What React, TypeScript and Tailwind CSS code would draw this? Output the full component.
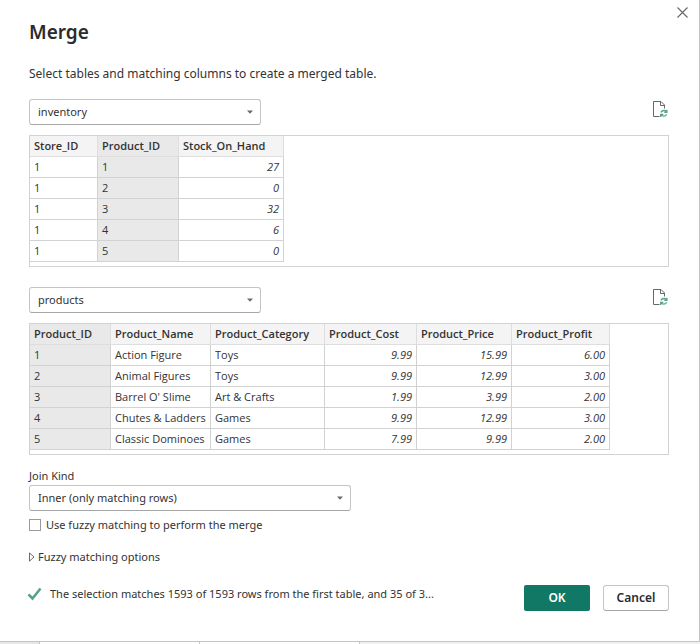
import { useId, useState } from "react";

type Column = { name: string; width: string; numeric?: boolean; selected?: boolean };

const inventoryColumns: Column[] = [
  { name: "Store_ID", width: "w-[68px]" },
  { name: "Product_ID", width: "w-[81px]", selected: true },
  { name: "Stock_On_Hand", width: "w-[105px]", numeric: true },
];

const inventoryRows = [
  ["1", "1", "27"],
  ["1", "2", "0"],
  ["1", "3", "32"],
  ["1", "4", "6"],
  ["1", "5", "0"],
];

const productColumns: Column[] = [
  { name: "Product_ID", width: "w-[81px]", selected: true },
  { name: "Product_Name", width: "w-[100px]" },
  { name: "Product_Category", width: "w-[114px]" },
  { name: "Product_Cost", width: "w-[92px]", numeric: true },
  { name: "Product_Price", width: "w-[95px]", numeric: true },
  { name: "Product_Profit", width: "w-[98px]", numeric: true },
];

const productRows = [
  ["1", "Action Figure", "Toys", "9.99", "15.99", "6.00"],
  ["2", "Animal Figures", "Toys", "9.99", "12.99", "3.00"],
  ["3", "Barrel O' Slime", "Art & Crafts", "1.99", "3.99", "2.00"],
  ["4", "Chutes & Ladders", "Games", "9.99", "12.99", "3.00"],
  ["5", "Classic Dominoes", "Games", "7.99", "9.99", "2.00"],
];

function Dropdown({ id, label, width, options }: { id: string; label?: string; width: string; options: string[] }) {
  return (
    <div className={`relative ${width}`}>
      <select
        id={id}
        aria-label={label}
        className="block h-[26px] w-full appearance-none rounded-[3px] border border-[#c4c4c4] border-b-[#a6a6a6] bg-white px-2 text-[11px] leading-4 text-[#333333]"
      >
        {options.map((option) => (
          <option key={option}>{option}</option>
        ))}
      </select>
      <svg className="pointer-events-none absolute top-[11px] right-2 h-[4px] w-[6px]" viewBox="0 0 6 4" aria-hidden="true">
        <path d="M0 0.5h6L3 3.8z" fill="#6a6a6a" />
      </svg>
    </div>
  );
}

function RefreshIcon() {
  return (
    <svg width="16" height="18" viewBox="0 0 16 18" fill="none" aria-hidden="true">
      <path d="M6.500 16.500h-6v-15h7.500L11.500 5v3.500" stroke="#686868" />
      <path d="M7.500 1.500v4h4" stroke="#686868" />
      <path d="M7.900 12.400c.7-1.300 1.700-1.900 3-1.900 1.100 0 1.900.4 2.500 1.200M13.900 9.700v2.600h-2.600M13.700 14.200c-.7 1.300-1.700 1.900-3 1.900-1.100 0-1.900-.4-2.500-1.200M7.700 16.900v-2.600h2.600" stroke="#5aa18b" strokeWidth="1.300" />
    </svg>
  );
}

function PreviewTable({ label, columns, rows }: { label: string; columns: Column[]; rows: string[][] }) {
  return (
    <div className="overflow-x-auto border border-[#d2d2d2] pb-1">
      <table aria-label={label} className="table-fixed border-separate border-spacing-0 font-['Open_Sans',sans-serif] text-[11px] leading-5 text-[#333333]">
        <thead>
          <tr>
            {columns.map((column) => (
              <th
                key={column.name}
                scope="col"
                className={`h-[21px] border-r border-b border-[#dedede] px-1 py-0 text-left font-semibold whitespace-nowrap ${column.width} ${column.selected ? "bg-[#e9e9e9]" : "bg-[#f4f4f4]"}`}
              >
                {column.name}
              </th>
            ))}
          </tr>
        </thead>
        <tbody>
          {rows.map((row) => (
            <tr key={row.join("|")}>
              {row.map((value, index) => (
                <td
                  key={columns[index].name}
                  className={`h-[21px] border-r border-b border-[#d2d2d2] px-1 py-0 whitespace-nowrap ${columns[index].selected ? "bg-[#e9e9e9]" : "bg-white"} ${columns[index].numeric ? "text-right italic" : ""}`}
                >
                  {value}
                </td>
              ))}
            </tr>
          ))}
        </tbody>
      </table>
    </div>
  );
}

type SourceProps = { id: string; label: string; selected: string; options: string[]; columns: Column[]; rows: string[][] };

function TableSource({ id, label, options, columns, rows, selected }: SourceProps) {
  return (
    <section className="flex flex-col gap-[10px]">
      <div className="flex items-start justify-between">
        <Dropdown id={id} label={label} width="w-[232px]" options={options} />
        <button type="button" aria-label={`Refresh ${selected}`} className="pt-[1px]">
          <RefreshIcon />
        </button>
      </div>
      <PreviewTable label={selected} columns={columns} rows={rows} />
    </section>
  );
}

export default function App() {
  const id = useId();
  const [fuzzy, setFuzzy] = useState(false);

  return (
    <div className="bg-[#f0f0f0] font-['Noto_Sans','Open_Sans',sans-serif] text-[11px] leading-4 text-[#333333]">
      <main className="border-r border-b border-[#c4c4c4] bg-white pb-[30px]">
        <div className="flex h-[22px] justify-end pr-[10px]">
          <button type="button" aria-label="Close" className="pt-0.5">
            <svg width="13" height="13" viewBox="0 0 13 13" fill="none" aria-hidden="true">
              <path d="M1.500 1.500l10 10M11.500 1.500l-10 10" stroke="#6a6a6a" strokeWidth="1.200" />
            </svg>
          </button>
        </div>

        <div className="pr-[30px] pl-[29px]">
          <h1 className="text-[19px] leading-5 font-semibold text-[#2b2b2b]">Merge</h1>
          <p className="mt-6 text-[12px]">Select tables and matching columns to create a merged table.</p>

          <div className="mt-[17px] flex flex-col gap-5">
            <TableSource
              id={`${id}-first`}
              label="First table"
              selected="inventory"
              options={["inventory", "products"]}
              columns={inventoryColumns}
              rows={inventoryRows}
            />
            <TableSource
              id={`${id}-second`}
              label="Second table"
              selected="products"
              options={["products", "inventory"]}
              columns={productColumns}
              rows={productRows}
            />
          </div>

          <label htmlFor={`${id}-join`} className="mt-[13px] mb-[1px] block">
            Join Kind
          </label>
          <Dropdown id={`${id}-join`} width="w-[322px]" options={["Inner (only matching rows)"]} />

          <label className="mt-[6px] flex items-center gap-[5px]">
            <input
              type="checkbox"
              checked={fuzzy}
              onChange={(event) => setFuzzy(event.target.checked)}
              className="size-3 appearance-none border border-[#9a9a9a] bg-white checked:bg-[#117865]"
            />
            Use fuzzy matching to perform the merge
          </label>

          <button type="button" aria-expanded="false" className="mt-4 flex items-center gap-[3px]">
            <svg width="6" height="10" viewBox="0 0 6 10" fill="none" aria-hidden="true">
              <path d="M.5.9v8.200L5 5z" stroke="#6a6a6a" />
            </svg>
            Fuzzy matching options
          </button>

          <div className="mt-5 flex items-start justify-between">
            <p className="-ml-0.5 flex items-center gap-2 pt-px" role="status">
              <svg width="15" height="14" viewBox="0 0 15 14" fill="none" aria-hidden="true">
                <path d="M1.500 7.300l4 4.200L13.500 1.500" stroke="#5aa18b" strokeWidth="2.600" />
              </svg>
              The selection matches 1593 of 1593 rows from the first table, and 35 of 3...
            </p>
            <div className="flex gap-[13px] text-[12px] font-semibold">
              <button type="button" className="h-[26px] w-[66px] rounded-[2px] bg-[#117865] text-white">
                OK
              </button>
              <button type="button" className="h-[26px] w-[66px] rounded-[3px] border border-[#c4c4c4] border-b-[#a6a6a6] bg-white text-[#2b2b2b]">
                Cancel
              </button>
            </div>
          </div>
        </div>
      </main>
      <div className="flex h-[2px]" aria-hidden="true">
        <div className="w-10 border-r border-[#c4c4c4] bg-[#e6e6e6]" />
        <div className="w-40 border-r border-[#c4c4c4] bg-white" />
        <div className="w-40 border-r border-[#c4c4c4] bg-white" />
      </div>
    </div>
  );
}
